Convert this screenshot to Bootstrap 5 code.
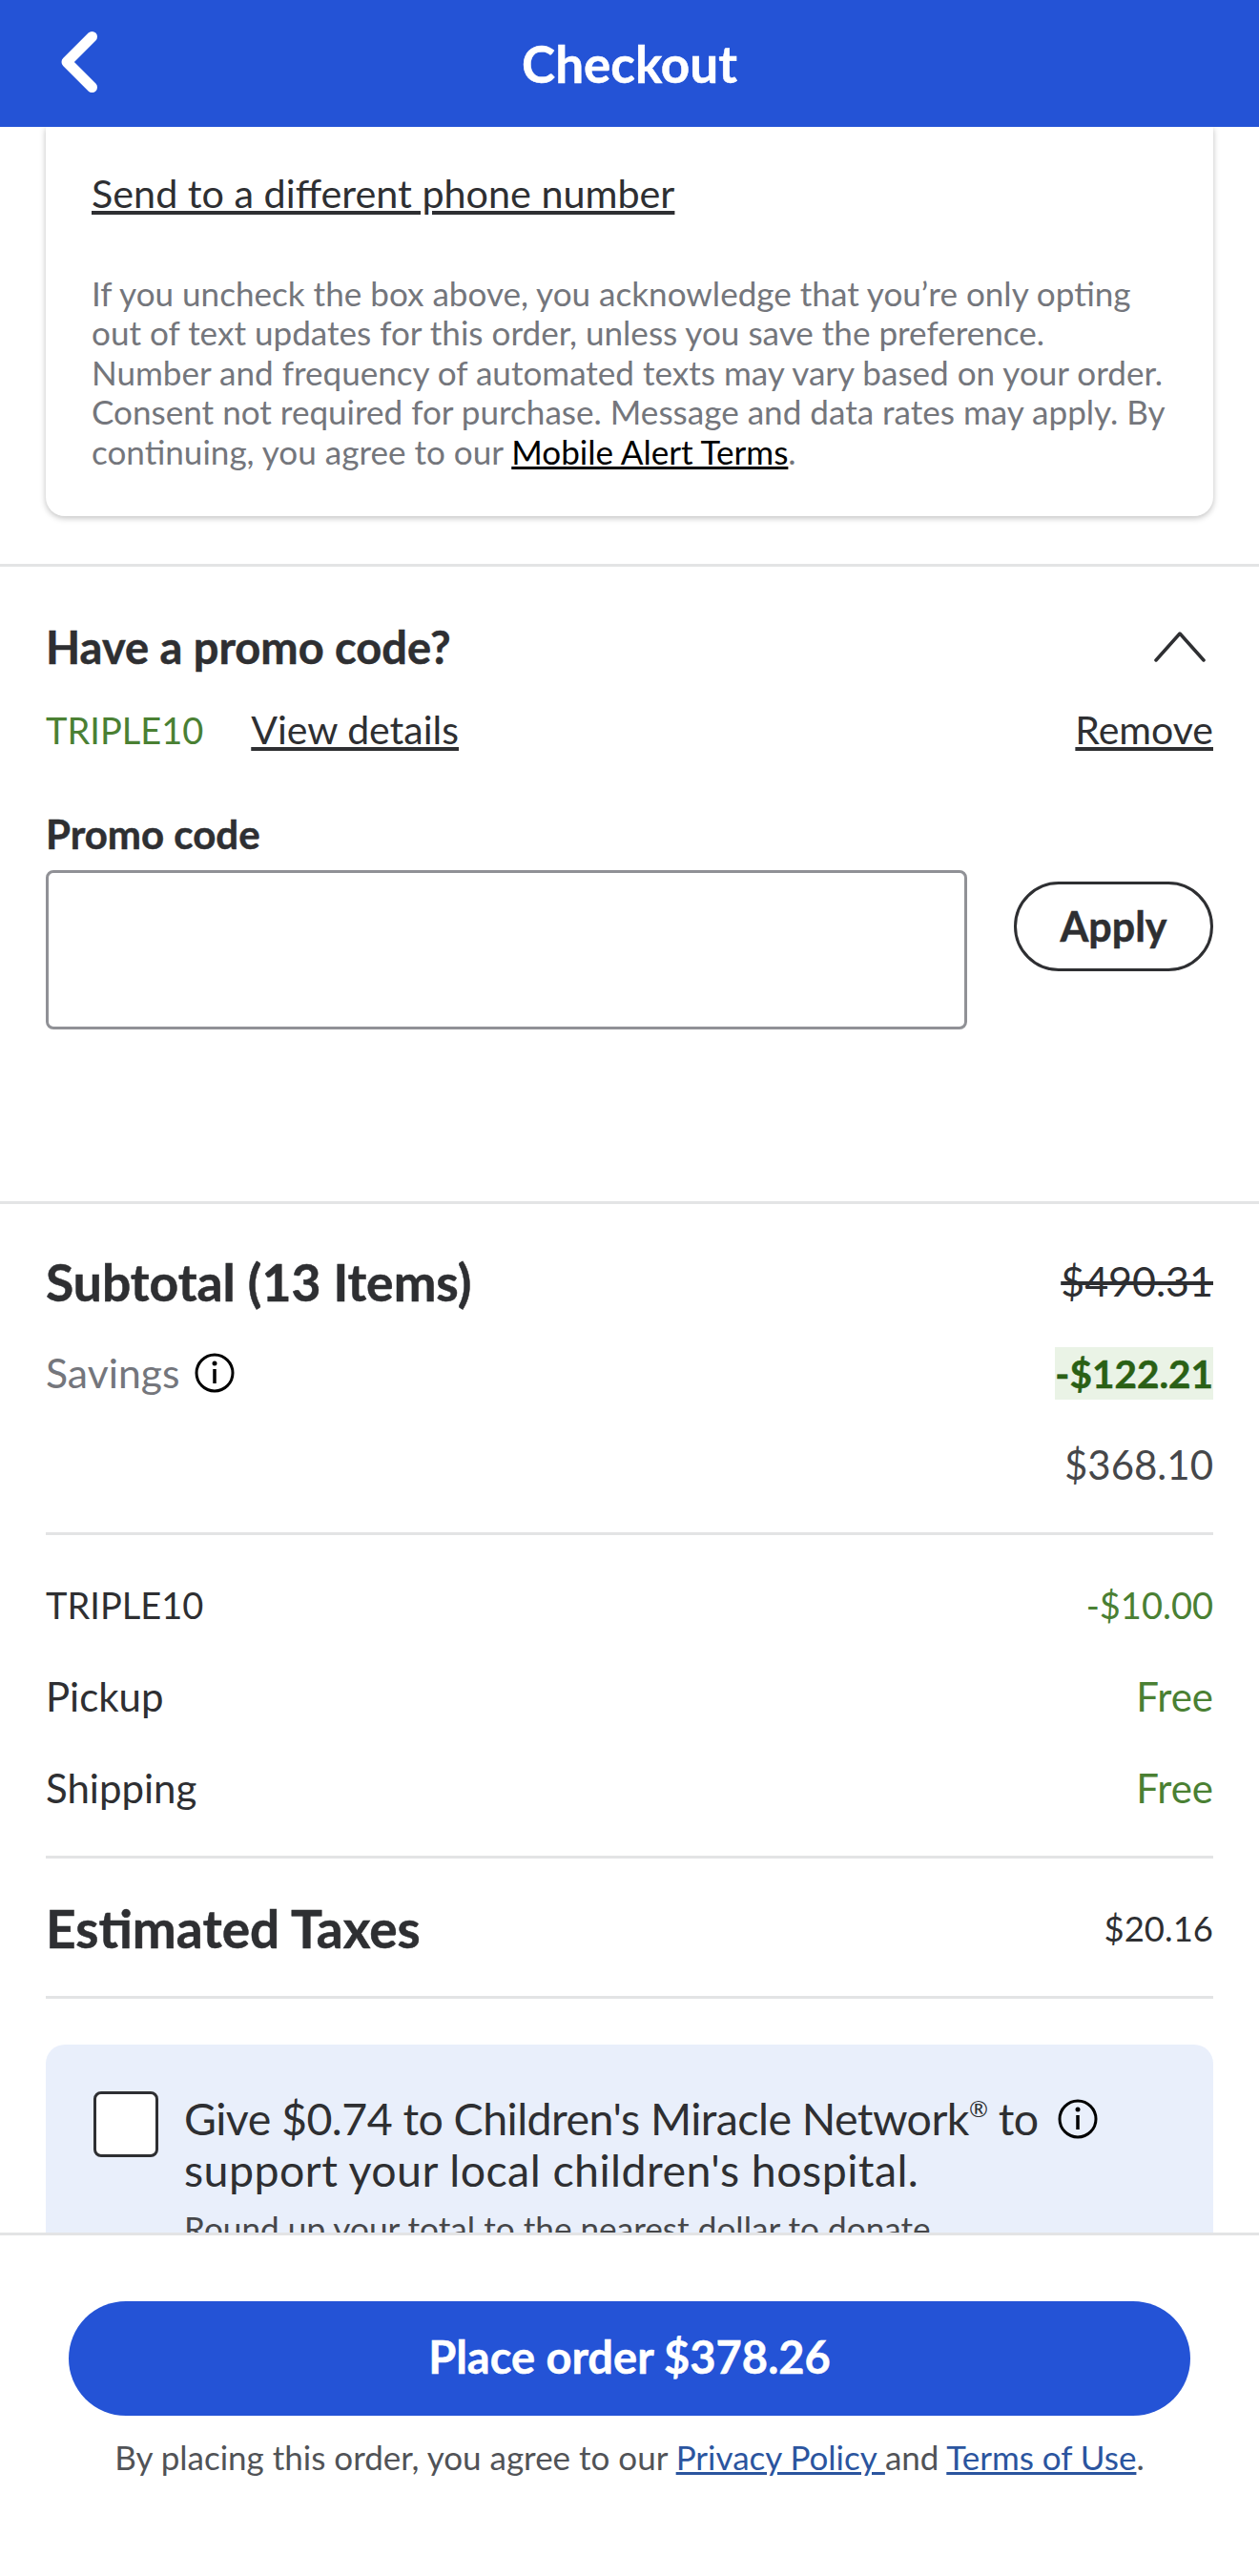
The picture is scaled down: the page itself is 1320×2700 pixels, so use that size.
<!DOCTYPE html>
<html lang="en">
<head>
  <meta charset="UTF-8">
  <meta name="viewport" content="width=device-width, initial-scale=1.0">
  <title>Checkout</title>
  <link href="https://cdn.jsdelivr.net/npm/bootstrap@5.3.0/dist/css/bootstrap.min.css" rel="stylesheet">
  <style>
    html, body { height: 100%; }
    body {
      font-family: "Lato", "Liberation Sans", sans-serif;
      color: #2e2f32;
      background: #fff;
      overflow: hidden;
    }
    a { color: inherit; }
    .screen { height: 2700px; }
    .heavy-tx { font-weight: 700; -webkit-text-stroke: .5px currentColor; }
    .top-bar { height: 133px; background: #2453d6; flex: none; position: relative; z-index: 2; }
    .top-bar h1 { font-size: 53px; margin: 0; }
    .back-btn { position: absolute; left: 60px; top: 30px; line-height: 0; }
    .scroll-area { flex: 1 1 auto; min-height: 0; overflow: hidden; }

    .sms-card {
      margin: 0 48px;
      height: 408px;
      padding: 42px 48px 0;
      border-radius: 0 0 20px 20px;
      box-shadow: 0 2px 6px rgba(0, 0, 0, .25);
    }
    .sms-link { font-size: 41.3px; line-height: 54px; }
    .sms-note { font-size: 35.1px; line-height: 41.4px; color: #74767c; margin: 58px 0 0; white-space: nowrap; }
    .sms-note a { color: #000; }

    .rule-full { height: 3px; background: #e3e4e5; margin-top: 50px; }
    .promo-box { height: 665px; padding: 0 48px; }
    .promo-title { font-size: 47px; line-height: 56px; padding-top: 56px; }
    .promo-row { font-size: 41px; line-height: 50px; margin-top: 34px; }
    .promo-code { color: #4a8033; font-size: 38px; }
    .details-link { margin-left: 50px; }
    .promo-label { font-size: 42px; line-height: 46px; margin-top: 61px; }
    .promo-input {
      width: 966px; height: 167px; margin-top: 15px;
      border: 3px solid #909196; border-radius: 8px;
    }
    .apply-btn {
      width: 209px; height: 94px; margin-top: 27px;
      border: 3px solid #2e2f32; border-radius: 47px;
      background: #fff; color: #2e2f32;
      font-size: 43px; padding: 0;
    }
    .totals { padding: 0 48px; }
    .rule-part { height: 3px; background: #e3e4e5; }
    .line-big { font-size: 53.4px; }
    .line-tax { font-size: 55px; }
    .line-reg { font-size: 42px; line-height: 50px; }
    .old-price { font-size: 43px; text-decoration: line-through; }
    .save-tag { background: #eaf3e6; color: #2a6015; font-size: 40.5px; line-height: 55px; }
    .text-grey { color: #74767c; font-size: 42.7px; }
    .text-deal { color: #4a8033; }
    .net-price { font-size: 42px; line-height: 60px; color: #46474a; }
    .tax-price { font-size: 36.5px; }
    .caps-tx { font-size: 38px; }

    .sum-row1 { height: 66px; margin-top: 48px; }
    .sum-row2 { height: 66px; margin-top: 30px; }
    .sum-row3 { margin-top: 33px; }
    .sum-rule1 { margin-top: 41px; }
    .sum-row4 { margin-top: 48px; }
    .sum-row5 { margin-top: 46px; }
    .sum-rule2 { margin-top: 46px; }
    .sum-row6 { height: 66px; margin-top: 40px; }
    .sum-rule3 { margin-top: 38px; }

    .donate-box {
      background: #e9effb;
      border-radius: 20px;
      margin: 48px 48px 0;
      padding: 49px 50px 0;
      height: 260px;
    }
    .donate-check {
      width: 68px; height: 69px; flex: none; margin-right: 27px;
      border: 3px solid #2e2f32; border-radius: 8px; background: #fff;
    }
    .donate-text { font-size: 46.5px; line-height: 54px; margin-top: 1px; white-space: nowrap; }
    .donate-text sup { font-size: 24px; top: -.8em; }
    .give-one { letter-spacing: -.55px; }
    .give-two { letter-spacing: .45px; }
    .donate-info { margin: 7px 0 0 21px; }
    .donate-sub { font-size: 35.2px; line-height: 44px; margin-top: 12px; color: #46474a; }

    .foot-bar { height: 360px; flex: none; border-top: 3px solid #e3e4e5; background: #fff; padding: 69px 72px 0; position: relative; z-index: 2; }
    .order-btn {
      height: 120px; border: 0; border-radius: 60px;
      background: #2453d6; color: #fff;
      font-size: 47px; padding: 0 0 3px;
    }
    .order-btn:hover { background: #2453d6; color: #fff; }
    .foot-note { font-size: 35px; line-height: 44px; color: #515357; margin-top: 21px; }
    .foot-note a { color: #2b559f; }
  </style>
</head>
<body>
  <div class="screen d-flex flex-column">
    <header class="top-bar d-flex align-items-center justify-content-center text-white">
      <a href="#" class="back-btn">
        <svg width="46" height="72" viewBox="0 0 46 72" fill="none" stroke="#fff" stroke-width="11" stroke-linecap="round" stroke-linejoin="round"><path d="M36.5 8.5 10 35l26.500 26.500"/></svg>
      </a>
      <h1 class="heavy-tx">Checkout</h1>
    </header>

    <main class="scroll-area">
      <div class="sms-card bg-white">
        <a href="#" class="sms-link">Send to a different phone number</a>
        <p class="sms-note">If you uncheck the box above, you acknowledge that you’re only opting<br>out of text updates for this order, unless you save the preference.<br>Number and frequency of automated texts may vary based on your order.<br>Consent not required for purchase. Message and data rates may apply. By<br>continuing, you agree to our <a href="#">Mobile Alert Terms</a>.</p>
      </div>
      <div class="rule-full"></div>

      <section class="promo-box">
        <div class="promo-title heavy-tx d-flex justify-content-between align-items-center">
          <span>Have a promo code?</span>
          <svg class="me-2" width="54" height="32" viewBox="0 0 54 32" fill="none" stroke="#2e2f32" stroke-width="3.5" stroke-linecap="round" stroke-linejoin="round"><path d="M2 30 27 2l25 28"/></svg>
        </div>
        <div class="promo-row d-flex">
          <span class="promo-code">TRIPLE10</span>
          <a href="#" class="details-link">View details</a>
          <a href="#" class="ms-auto">Remove</a>
        </div>
        <div class="promo-label heavy-tx">Promo code</div>
        <div class="d-flex justify-content-between align-items-start">
          <div class="promo-input"></div>
          <button class="btn apply-btn heavy-tx" type="button">Apply</button>
        </div>
      </section>
      <div class="rule-full mt-0"></div>

      <section class="totals">
        <div class="d-flex justify-content-between align-items-center sum-row1">
          <span class="line-big heavy-tx">Subtotal (13 Items)</span>
          <span class="old-price">$490.31</span>
        </div>
        <div class="d-flex justify-content-between align-items-center sum-row2">
          <span class="line-reg text-grey d-flex align-items-center gap-3">Savings
            <svg width="42" height="42" viewBox="0 0 42 42" fill="none" stroke="#000" stroke-width="3"><circle cx="21" cy="21" r="19"/><path d="M21 17v15" stroke-width="3.5"/><circle cx="21" cy="11" r="2.5" fill="#000" stroke="none"/></svg>
          </span>
          <span class="save-tag heavy-tx">-$122.21</span>
        </div>
        <div class="text-end net-price sum-row3">$368.10</div>
        <div class="rule-part sum-rule1"></div>
        <div class="line-reg d-flex justify-content-between sum-row4"><span class="caps-tx">TRIPLE10</span><span class="text-deal caps-tx">-$10.00</span></div>
        <div class="line-reg d-flex justify-content-between sum-row5"><span>Pickup</span><span class="text-deal">Free</span></div>
        <div class="line-reg d-flex justify-content-between sum-row5"><span>Shipping</span><span class="text-deal">Free</span></div>
        <div class="rule-part sum-rule2"></div>
        <div class="d-flex justify-content-between align-items-center sum-row6">
          <span class="line-tax heavy-tx">Estimated Taxes</span>
          <span class="tax-price">$20.16</span>
        </div>
        <div class="rule-part sum-rule3"></div>
      </section>

      <section class="donate-box">
        <div class="d-flex">
          <div class="donate-check"></div>
          <div>
            <div class="donate-text d-flex"><span><span class="give-one">Give $0.74 to Children's Miracle Network<sup>®</sup> to</span><br><span class="give-two">support your local children's hospital.</span></span>
              <svg class="donate-info flex-shrink-0" width="42" height="42" viewBox="0 0 42 42" fill="none" stroke="#000" stroke-width="3"><circle cx="21" cy="21" r="19"/><path d="M21 17v15" stroke-width="3.5"/><circle cx="21" cy="11" r="2.5" fill="#000" stroke="none"/></svg>
            </div>
            <div class="donate-sub">Round up your total to the nearest dollar to donate.</div>
          </div>
        </div>
      </section>
    </main>

    <footer class="foot-bar">
      <button class="btn order-btn heavy-tx w-100" type="button">Place order $378.26</button>
      <p class="foot-note text-center">By placing this order, you agree to our <a href="#">Privacy Policy </a>and <a href="#">Terms of Use</a>.</p>
    </footer>
  </div>

  <script src="https://cdn.jsdelivr.net/npm/bootstrap@5.3.0/dist/js/bootstrap.bundle.min.js"></script>
</body>
</html>
